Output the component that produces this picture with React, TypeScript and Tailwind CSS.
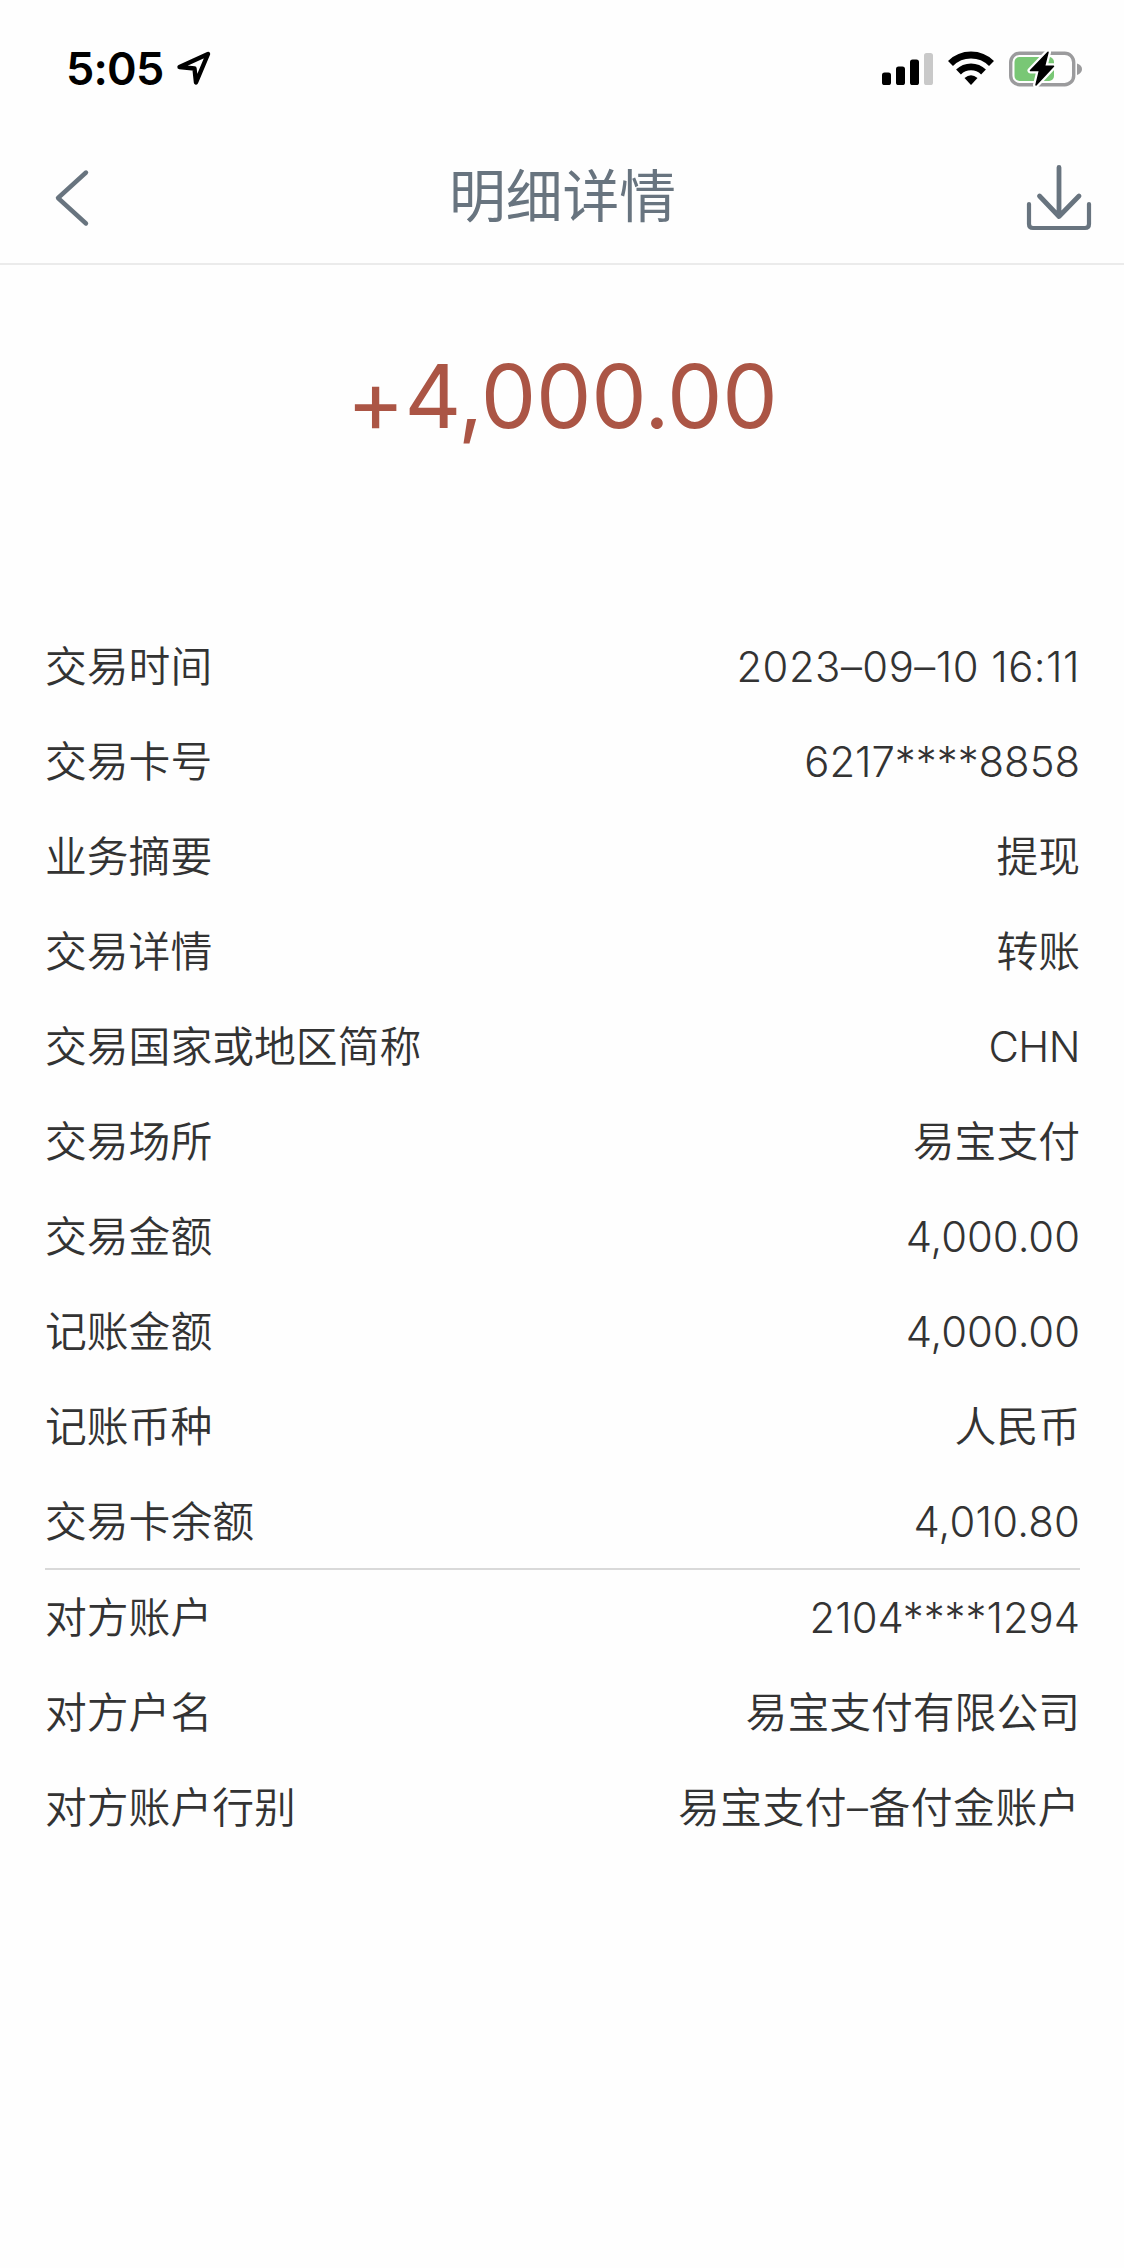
const DETAILS = [
  { label: '交易时间', value: '2023–09–10 16:11', spacing: 'tracking-[0.5px]' },
  { label: '交易卡号', value: '6217****8858', spacing: '' },
  { label: '业务摘要', value: '提现', spacing: '' },
  { label: '交易详情', value: '转账', spacing: '' },
  { label: '交易国家或地区简称', value: 'CHN', spacing: 'tracking-[-0.5px]' },
  { label: '交易场所', value: '易宝支付', spacing: '' },
  { label: '交易金额', value: '4,000.00', spacing: '' },
  { label: '记账金额', value: '4,000.00', spacing: '' },
  { label: '记账币种', value: '人民币', spacing: '' },
  { label: '交易卡余额', value: '4,010.80', spacing: 'tracking-[0.2px]' },
]

const COUNTERPARTY = [
  { label: '对方账户', value: '2104****1294', spacing: '' },
  { label: '对方户名', value: '易宝支付有限公司', spacing: '' },
  { label: '对方账户行别', value: '易宝支付–备付金账户', spacing: 'tracking-[0.5px]' },
]

type RowProps = { label: string; value: string; spacing: string }

function Row({ label, value, spacing }: RowProps) {
  return (
    <div className="flex h-[95px] items-center justify-between whitespace-nowrap pt-px">
      <span>{label}</span>
      <span className={spacing}>{value}</span>
    </div>
  )
}

function StatusBar() {
  return (
    <div className="flex h-[132px] items-start justify-between pl-[66px] pr-[41px] pt-[46px]">
      <div className="flex items-start">
        <span className="font-['Inter'] text-[45px] font-semibold leading-[46px] tracking-[-0.8px]">5:05</span>
        <svg className="ml-[13px] mt-[4px]" width="38" height="38" viewBox="0 0 38 38" fill="none">
          <path d="M3.5 17 L32 4 L20 32.5 L18.5 18.5 Z" stroke="#000" strokeWidth="4.4" strokeLinejoin="round" />
        </svg>
      </div>
      <div className="flex items-start pt-[5px]">
        <svg width="52" height="36" viewBox="0 0 52 36">
          <rect x="0" y="21.5" width="9" height="12.5" rx="2.6" />
          <rect x="14" y="15.5" width="9" height="18.5" rx="2.6" />
          <rect x="28" y="8.5" width="9" height="25.5" rx="2.6" />
          <rect x="42" y="2" width="9" height="32" rx="2.6" fill="#c9c9c9" />
        </svg>
        <svg className="ml-[14px]" width="46" height="36" viewBox="0 0 46 36" fill="none" stroke="#000">
          <path d="M2.5 12.5 A29 29 0 0 1 43.5 12.5" strokeWidth="7" />
          <path d="M10.5 21 A17.7 17.7 0 0 1 35.5 21" strokeWidth="6.8" />
          <path d="M16.5 27 Q23 21.5 29.5 27 L23 34 Z" fill="#000" stroke="none" />
        </svg>
        <svg className="ml-[14px] mr-[1px]" width="74" height="38" viewBox="0 0 74 38">
          <rect x="2.7" y="2.2" width="63" height="31.5" rx="9" fill="none" stroke="#9b9b9d" strokeWidth="3.4" />
          <path d="M69 12.5 Q74 14 74 18 Q74 22 69 24 Z" fill="#9b9b9d" />
          <rect x="6.5" y="6" width="39.5" height="24" rx="5" fill="#79c775" />
          <path
            d="M40 1.2 L22.5 19.5 H31.5 L28 34 L45.5 15.2 H36.5 Z"
            fill="#fff"
            stroke="#fff"
            strokeWidth="6"
            strokeLinejoin="round"
          />
          <path d="M40 1.2 L22.5 19.5 H31.5 L28 34 L45.5 15.2 H36.5 Z" stroke="#000" strokeWidth="1.5" strokeLinejoin="round" />
        </svg>
      </div>
    </div>
  )
}

function NavBar() {
  return (
    <header className="flex h-[133px] items-start justify-between border-b-2 border-[#ebebeb] pl-[54px] pr-[32px] text-[#68747f]">
      <svg className="mt-[36px]" width="36" height="60" viewBox="0 0 36 60" fill="none" stroke="currentColor">
        <path d="M32 4.5 L4 30 L32 55.5" strokeWidth="4.4" strokeLinecap="round" strokeLinejoin="round" />
      </svg>
      <h1 className="ml-[9px] mt-[20px] text-[56.8px] leading-[80px]">明细详情</h1>
      <svg className="mt-[31px]" width="66" height="70" viewBox="0 0 66 70" fill="none" stroke="currentColor">
        <path
          d="M33 4.5 V53 M13.5 33 L33 53.5 L53 33"
          strokeWidth="4.8"
          strokeLinecap="round"
          strokeLinejoin="round"
        />
        <path d="M3 41 V61 Q3 65 7 65 H59 Q63 65 63 61 V41" strokeWidth="4.2" strokeLinecap="round" />
      </svg>
    </header>
  )
}

export default function App() {
  return (
    <div className="h-[2268px] w-[1124px] overflow-hidden bg-[#fefefe] font-['Noto_Sans_CJK_SC',sans-serif]">
      <StatusBar />
      <NavBar />
      <div className="flex h-[354px] justify-center pt-[66px]">
        <div className="font-['Inter'] text-[88px] leading-[130px] tracking-[-0.3px] text-[#ab5545]">
          <span className="align-[-5px] leading-none">+</span>4,000.00
        </div>
      </div>
      <main className="pl-[45px] pr-[44px] font-['Inter','Noto_Sans_CJK_SC',sans-serif] text-[41.8px] font-[350] text-[#333]">
        <section className="h-[951px] border-b-2 border-[#d9d9d9]">
          {DETAILS.map(row => (
            <Row key={row.label} {...row} />
          ))}
        </section>
        <section>
          {COUNTERPARTY.map(row => (
            <Row key={row.label} {...row} />
          ))}
        </section>
      </main>
    </div>
  )
}
